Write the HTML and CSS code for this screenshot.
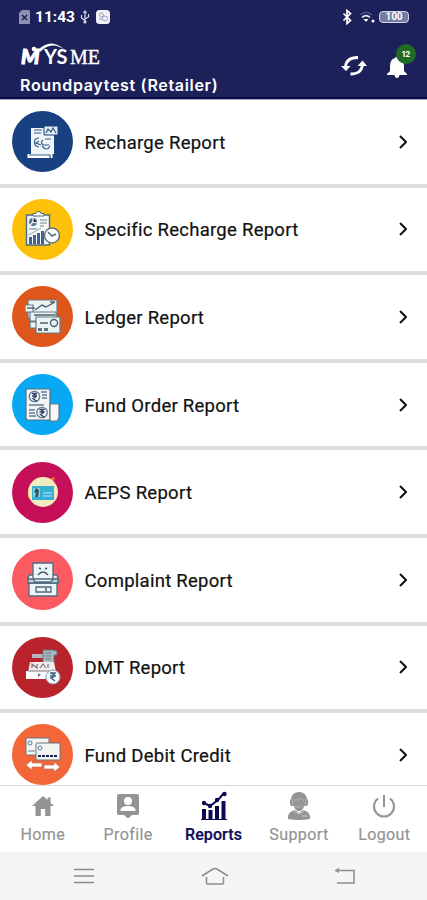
FILE: index.html
```html
<!DOCTYPE html>
<html lang="en">
<head>
    <meta charset="UTF-8">
    <meta name="viewport" content="width=device-width, initial-scale=1.0">
    <title>Reports</title>
    <link rel="stylesheet" href="styles.css">
</head>
<body>
    <div class="app">
        <header class="header">
            <div class="status-bar">
                <svg class="sim" width="11" height="15" viewBox="0 0 11 15"><path d="M3 0h7l1 1v13H0V3z" fill="#8c90b2"/><path d="M3 5l5 5M8 5l-5 5" stroke="#1c2259" stroke-width="1.5"/></svg>
                <span class="time">11:43</span>
                <svg class="usb" width="10" height="14" viewBox="0 0 10 14" fill="none" stroke="#d8daea" stroke-width="1.2"><path d="M5 1v12M1.500 5v3L5 10.500M8.500 4v3L5 9M3.500 3L5 1l1.500 2"/><circle cx="5" cy="12" r="1" fill="#d8daea"/></svg>
                <svg class="app-badge" width="14" height="14" viewBox="0 0 14 14"><rect width="14" height="14" rx="3.500" fill="#f0f1f7"/><g fill="none" stroke="#9fa3c0"><circle cx="5.500" cy="5" r="2"/><circle cx="9" cy="8.500" r="2.500"/><path d="M3 9h3"/></g></svg>
                <div class="status-right">
                    <svg width="11" height="16" viewBox="0 0 11 16" fill="none" stroke="#fff" stroke-width="1.700"><path d="M1.500 4.500l7 7-3.500 3V1.500l3.500 3-7 7"/></svg>
                    <svg class="wifi" width="15" height="12" viewBox="0 0 15 12"><path d="M0 4q6-5.500 12 0" stroke="#4d5286" stroke-width="1.500" fill="none"/><path d="M2 6.500q4-4 8 0" stroke="#e4e6f0" stroke-width="1.700" fill="none"/><path d="M3.500 8h5L6 11z" fill="#fff"/><circle cx="13" cy="10" r="1.500" fill="#fff"/></svg>
                    <span class="battery">100</span>
                </div>
            </div>
            <div class="header-main">
                <div class="brand">
                    <div class="logo">
                        <svg class="logo-arc" width="48" height="12" viewBox="0 0 48 12"><path d="M18 8Q31-5 45 8Q31-2 20 10z" fill="#fff"/><circle cx="14" cy="7" r="2.300" fill="#fff"/></svg>
                        <span class="logo-m">M</span><span class="logo-y">YS</span><span class="logo-me">ME</span>
                    </div>
                    <div class="user">Roundpaytest (Retailer)</div>
                </div>
                <div class="actions">
                    <svg width="26" height="22" viewBox="0 0 26 22"><g fill="none" stroke="#fff" stroke-width="2.800"><path d="M4.500 12Q5 2.500 17 2.500"/><path d="M21.500 9Q21 19 9.500 19"/></g><path d="M0 11h9.500l-4.500 5zM16.500 11H26l-4.500-5.500z" fill="#fff"/></svg>
                    <div class="bell">
                        <svg width="20" height="24" viewBox="0 0 20 24"><path d="M8 3q2-3 4 0q5 1.500 5 8v5l3 3v1H0v-1l3-3v-5q0-6.500 5-8zM7.500 20h5q-.5 3-2.500 3t-2.500-3z" fill="#fff"/></svg>
                        <span class="count">12</span>
                    </div>
                </div>
            </div>
        </header>

        <main class="list">
            <div class="row">
                <div class="icon navy">
                    <svg width="36" height="36" viewBox="0 0 36 36"><path d="M6 4h23v26H6z" fill="#f0f5f8"/><path d="M2.500 30h25v4h-25z" fill="#fff"/><path d="M19 2h14v9H19z" fill="#e7eef5" stroke="#174180"/><g fill="none" stroke="#315d8a" stroke-width="1.200"><path d="M9 6h8M9 9h7M21 9l2-4 3 3 2-4 3 5M14 14c-6 0-6 8 0 9M14 17l-3 2 5 2M18 16q-3 2 0 5h6M17 22q5 6 8 0M20 15h6"/><path d="M4 31h21v3"/></g></svg>
                </div>
                <span class="label">Recharge Report</span>
                <svg class="chevron" width="8" height="14" viewBox="0 0 8 14"><path d="M1 1l6 6-6 6"/></svg>
            </div>
            <div class="row">
                <div class="icon yellow">
                    <svg width="36" height="36" viewBox="0 0 36 36"><path d="M1.500 4h23v30h-23z" fill="#f5f8f8" stroke="#506a76" stroke-width="1.400"/><path d="M8 5V2.500h3l1-2h3l1 2h3V5z" fill="#fff" stroke="#506a76"/><circle cx="8" cy="11" r="4" fill="#527694"/><path d="M8 7v4l4 1M5 14l3-3" stroke="#fff" stroke-width="1.200"/><path d="M15 9h7M15 12h7M15 15h4M4 18h8" stroke="#6a818e" stroke-width="1.200"/><path d="M4 33v-7h3v7M8 33v-9h3v9M12 33V22h3v11M16 33V20h3v13" fill="#3f638f"/><path d="M3 24l8-4 5-3" fill="none" stroke="#98a7ae"/><circle cx="27" cy="24.500" r="7.500" fill="#fff" stroke="#68747a" stroke-width="1.500"/><path d="M23 21l4 4 4-2" fill="none" stroke="#507080" stroke-width="1.500"/></svg>
                </div>
                <span class="label">Specific Recharge Report</span>
                <svg class="chevron" width="8" height="14" viewBox="0 0 8 14"><path d="M1 1l6 6-6 6"/></svg>
            </div>
            <div class="row">
                <div class="icon rust">
                    <svg width="36" height="36" viewBox="0 0 36 36"><g stroke="#637c84" stroke-width="1.200" fill="#edf3f3"><path d="M3 1h29v18H3z"/><path d="M0 6h8v7H0zM5 13h26v9H5zM5 23h8v6H5z"/><path d="M11 18h24v16H11z"/></g><g fill="none" stroke="#496570" stroke-width="1.400"><path d="M10 11l7-5 4 2 9-5M25 3h5M9 16h21M15 24h8M14 30h3M19 30h4"/><path d="M2 9h8"/><circle cx="29" cy="24" r="3.500"/></g><path d="M13 29h4v3h-4zM19 29h4v3h-4z" fill="#5b747e"/></svg>
                </div>
                <span class="label">Ledger Report</span>
                <svg class="chevron" width="8" height="14" viewBox="0 0 8 14"><path d="M1 1l6 6-6 6"/></svg>
            </div>
            <div class="row">
                <div class="icon blue">
                    <svg width="36" height="36" viewBox="0 0 36 36"><path d="M1 2h24v31H2l-1-2z" fill="#f2f4f6" stroke="#547082" stroke-width="1.200"/><path d="M25 17h9v14l-2 3h-7z" fill="#f5f7f8" stroke="#66767f" stroke-width="1.200"/><g fill="none" stroke="#617e93" stroke-width="1.300"><circle cx="9.500" cy="9.500" r="5.200"/><circle cx="17" cy="25.500" r="5.200"/><path d="M16 5h6M17 8h5M17 11h5M4 18h15M4 23h6M4 26h6M4 29h7"/></g><g fill="none" stroke="#243e67" stroke-width="1.300"><path d="M7 6.500h5M7 9h5M8 6.500q6 3 0 5l4 3"/><path d="M14.500 22.500h5M14.500 25h5M15.500 22.500q6 3 0 5l4 3"/></g></svg>
                </div>
                <span class="label">Fund Order Report</span>
                <svg class="chevron" width="8" height="14" viewBox="0 0 8 14"><path d="M1 1l6 6-6 6"/></svg>
            </div>
            <div class="row">
                <div class="icon magenta">
                    <svg width="36" height="36" viewBox="0 0 36 36"><path d="M24 5l6-2-2 6zM3 20l4 4-4 0z" fill="#f47b20"/><circle cx="18" cy="18" r="15" fill="#f2ebbd"/><path d="M7 12h22v14H7z" fill="#37afd2"/><path d="M8 14h7v9H8z" fill="#8acbdd"/><path d="M11 14l3 2-1 7h-3l1-4-2-1z" fill="#37505e"/><path d="M18 19h9M18 22h9" stroke="#8ed5e5" stroke-width="1.500"/></svg>
                </div>
                <span class="label">AEPS Report</span>
                <svg class="chevron" width="8" height="14" viewBox="0 0 8 14"><path d="M1 1l6 6-6 6"/></svg>
            </div>
            <div class="row">
                <div class="icon coral">
                    <svg width="36" height="36" viewBox="0 0 36 36"><g fill="#edf4f6" stroke="#4e6b7d" stroke-width="1.300"><path d="M4 13h28l1 4v4H3v-4z"/><path d="M8 1h20v16H8z"/><path d="M4 21h28v13H4z"/><path d="M3 17h5l2 3h16l2-3h5v4H3z" fill="#b4d2dc"/><path d="M11 25h15v5H11z"/></g><path d="M14 6l2 1M22 6l-2 1M13 13q5-6 10 0M21 26v3" fill="none" stroke="#445e6c" stroke-width="1.500"/></svg>
                </div>
                <span class="label">Complaint Report</span>
                <svg class="chevron" width="8" height="14" viewBox="0 0 8 14"><path d="M1 1l6 6-6 6"/></svg>
            </div>
            <div class="row">
                <div class="icon red">
                    <svg width="36" height="36" viewBox="0 0 36 36"><path d="M7 5h12v4H7z" fill="#b7b6bd"/><path d="M18 1h10l4 1v4h-3v9H18z" fill="#a5bac1" stroke="#61757f"/><path d="M5 13h24l2 10H3z" fill="#f2eded"/><path d="M1 22h29v8H1z" fill="#fff"/><g fill="none" stroke="#7b7380" stroke-width="1.200"><path d="M7 19v-4l5 4v-4M15 19l3-4 3 4M23 15v4M3 22h22M20 4h6M20 7h6M20 10h6"/></g><path d="M13 24l3 2-3 2z" fill="#6a7781"/><circle cx="28" cy="28" r="7" fill="#f7f9fb" stroke="#8ba3b7"/><path d="M25 24h6M25 27h6M26 24q7 3 0 5l4 3" fill="none" stroke="#3c6688" stroke-width="1.400"/></svg>
                </div>
                <span class="label">DMT Report</span>
                <svg class="chevron" width="8" height="14" viewBox="0 0 8 14"><path d="M1 1l6 6-6 6"/></svg>
            </div>
            <div class="row">
                <div class="icon orange">
                    <svg width="36" height="36" viewBox="0 0 36 36"><g fill="#f4f4f3" stroke="#697780"><rect x="1" y="1" width="23" height="17" rx="1"/><rect x="11" y="6" width="24" height="17" rx="1"/></g><g fill="none" stroke="#5481a0"><circle cx="5" cy="6" r="2"/><path d="M3 14h7"/><circle cx="15" cy="11" r="2"/></g><path d="M13 19h19" stroke="#17295b" stroke-width="2" stroke-dasharray="3 1"/><path d="M1 28l6-5v3h10v4H7v3zM35 30l-6-5v3H19v4h10v3z" fill="#fff" stroke="#b57762" stroke-width=".7"/></svg>
                </div>
                <span class="label">Fund Debit Credit</span>
                <svg class="chevron" width="8" height="14" viewBox="0 0 8 14"><path d="M1 1l6 6-6 6"/></svg>
            </div>
        </main>

        <nav class="tabs">
            <a class="tab">
                <svg width="30" height="30" viewBox="0 0 30 30" fill="currentColor"><path d="M15 5L4 15h3.500v10h5.300v-7h4.400v7h5.300V15H26l-3.500-3.200V6.500h-3v2.600z"/></svg>
                <span>Home</span>
            </a>
            <a class="tab">
                <svg width="30" height="30" viewBox="0 0 30 30"><path d="M6 3h18q2 0 2 2v17q0 2-2 2h-5l-4 3.500L11 24H6q-2 0-2-2V5q0-2 2-2z" fill="currentColor"/><circle cx="15" cy="10" r="4" fill="#fff"/><path d="M7.500 20v-1.500q1-3.500 7.500-3.500t7.500 3.500V20z" fill="#fff"/></svg>
                <span>Profile</span>
            </a>
            <a class="tab active">
                <svg width="30" height="30" viewBox="0 0 30 30"><path d="M2 28h26v1H2zM3 18h4v10H3zM9.500 19h4v9h-4zM16 15h4v13h-4zM22.500 10h4v18h-4z" fill="currentColor"/><path d="M5 12l6 3 8-6 6-7" fill="none" stroke="currentColor" stroke-width="2"/><g fill="currentColor"><circle cx="5" cy="12" r="2.200"/><circle cx="11" cy="15" r="2.200"/><circle cx="18" cy="9" r="2.200"/><circle cx="25.500" cy="3" r="2.200"/></g></svg>
                <span>Reports</span>
            </a>
            <a class="tab">
                <svg width="30" height="30" viewBox="0 0 30 30"><path d="M7 8q1-7 8-7t8 7l1 1v5l-2 1h-2q-1 5-5 5t-5-5H7l-1-2V9z" fill="currentColor"/><path d="M10 9q5 1 7-2l3 3M11 15q4 3 8-1M8.500 8v6M21.500 8v6" fill="none" stroke="#b4b4b4" stroke-width="1"/><path d="M4 28q-1-7 7-9l4 3 4-3q8 2 7 9-11 2-22 0z" fill="currentColor"/><path d="M10 20l5 3 5-3M18 25h5" fill="none" stroke="#ccc"/></svg>
                <span>Support</span>
            </a>
            <a class="tab">
                <svg width="30" height="30" viewBox="0 0 30 30" fill="none" stroke="currentColor" stroke-width="2"><path d="M15 4v12M9 7.500a10 10 0 1 0 12 0"/></svg>
                <span>Logout</span>
            </a>
        </nav>

        <footer class="system-bar">
            <svg width="20" height="16" viewBox="0 0 20 16" stroke="#8d8d8d" stroke-width="1.500"><path d="M0 1.500h20M0 8h20M0 14.500h20"/></svg>
            <svg width="28" height="18" viewBox="0 0 28 18" fill="none" stroke="#8d8d8d" stroke-width="1.500"><path d="M1 9L12 2q2-1 4 0l11 7M5.500 10v6q0 1 1 1h15q1 0 1-1v-6"/></svg>
            <svg width="20" height="17" viewBox="0 0 20 17" fill="none" stroke="#8d8d8d" stroke-width="1.500"><path d="M4 .5L1 2.500h18v12.500H2M1 2.500L4 4.500"/></svg>
        </footer>
    </div>
</body>
</html>
```

FILE: styles.css
```css
* {
    box-sizing: border-box;
}
body {
    margin: 0;
    font-family: Roboto, "Liberation Sans", sans-serif;
    background-color: #fff;
}
svg {
    display: block;
    flex-shrink: 0;
}
.app {
    display: flex;
    flex-direction: column;
    width: 427px;
    height: 900px;
    overflow: hidden;
}
.header {
    height: 100px;
    flex-shrink: 0;
    background-color: #1c2259;
    border-bottom: 1px solid #a9abc3;
    box-shadow: inset 0 -2px 0 #080b4b;
    color: #fff;
}
.status-bar {
    display: flex;
    align-items: center;
    height: 34px;
    padding: 0 18px 0 19px;
}
.time {
    margin-left: 5px;
    width: 40px;
    font-size: 15.5px;
    font-weight: 700;
    letter-spacing: 0;
}
.usb {
    margin-left: 5px;
}
.app-badge {
    margin-left: 6px;
}
.status-right {
    display: flex;
    align-items: center;
    margin-left: auto;
}
.wifi {
    margin-left: 7px;
}
.battery {
    width: 30px;
    height: 12px;
    margin-left: 4px;
    border: 1px solid #d5d7e5;
    border-radius: 4px;
    background-color: #777ba2;
    font-size: 10px;
    font-weight: 700;
    line-height: 10px;
    text-align: center;
}
.header-main {
    display: flex;
    justify-content: space-between;
    padding: 8px 18px 0 20px;
}
.logo {
    position: relative;
    display: flex;
    align-items: baseline;
    height: 30px;
    font-size: 20px;
    line-height: 28px;
}
.logo-arc {
    position: absolute;
    left: 0;
    top: 0;
}
.logo-m {
    width: 24px;
    padding-left: 1px;
    font-family: Lato, sans-serif;
    font-size: 21px;
    font-style: italic;
    font-weight: 900;
    -webkit-text-stroke: 1px #fff;
}
.logo-y {
    width: 26px;
    font-family: Lato, sans-serif;
    font-weight: 700;
}
.logo-me {
    font-family: "Liberation Serif", serif;
    font-weight: 400;
    -webkit-text-stroke: 0.4px #fff;
}
.user {
    margin-top: 3px;
    font-family: Inter, sans-serif;
    font-size: 16px;
    font-weight: 600;
    line-height: 20px;
    letter-spacing: 0.68px;
    white-space: nowrap;
}
.actions {
    display: flex;
    gap: 20px;
    padding-top: 13px;
}
.bell {
    position: relative;
    width: 22px;
}
.count {
    position: absolute;
    left: 9px;
    top: -11px;
    width: 20px;
    height: 20px;
    border-radius: 50%;
    background-color: #1f6a25;
    font-family: Inter, sans-serif;
    font-size: 8px;
    font-weight: 700;
    line-height: 20px;
    text-align: center;
}
.list {
    flex: 1;
    min-height: 0;
    overflow: hidden;
}
.row {
    display: flex;
    align-items: center;
    height: 87.6px;
    padding: 0 20px 0 12px;
    border-bottom: 4px solid #dedede;
}
.icon {
    display: flex;
    align-items: center;
    justify-content: center;
    width: 61px;
    height: 61px;
    border-radius: 50%;
}
.navy {
    background-color: #174180;
}
.yellow {
    background-color: #fdc109;
}
.rust {
    background-color: #df561d;
}
.blue {
    background-color: #08a8f4;
}
.magenta {
    background-color: #c50f58;
}
.coral {
    background-color: #fb5a60;
}
.red {
    background-color: #b9232c;
}
.orange {
    background-color: #f26638;
}
.label {
    margin-left: 11.5px;
    padding-top: 2px;
    font-size: 18.5px;
    letter-spacing: 0.27px;
    -webkit-text-stroke: 0.2px #111;
    color: #111;
    white-space: nowrap;
}
.chevron {
    margin-left: auto;
    fill: none;
    stroke: #111;
    stroke-width: 2;
}
.tabs {
    display: flex;
    height: 67px;
    flex-shrink: 0;
    border-top: 1px solid #d9d9d9;
    background-color: #fff;
}
.tab {
    display: flex;
    flex: 1;
    flex-direction: column;
    align-items: center;
    padding-top: 5px;
    color: #949494;
    font-size: 16px;
    line-height: 20px;
    letter-spacing: 0.4px;
    -webkit-text-stroke: 0.2px;
}
.tab span {
    margin-top: 4px;
}
.tab.active {
    color: #0b0b55;
    font-weight: 500;
    letter-spacing: 0.1px;
}
.system-bar {
    display: flex;
    align-items: center;
    justify-content: space-between;
    height: 48px;
    flex-shrink: 0;
    padding: 0 72px 0 74px;
    background-color: #f5f5f5;
}
```
